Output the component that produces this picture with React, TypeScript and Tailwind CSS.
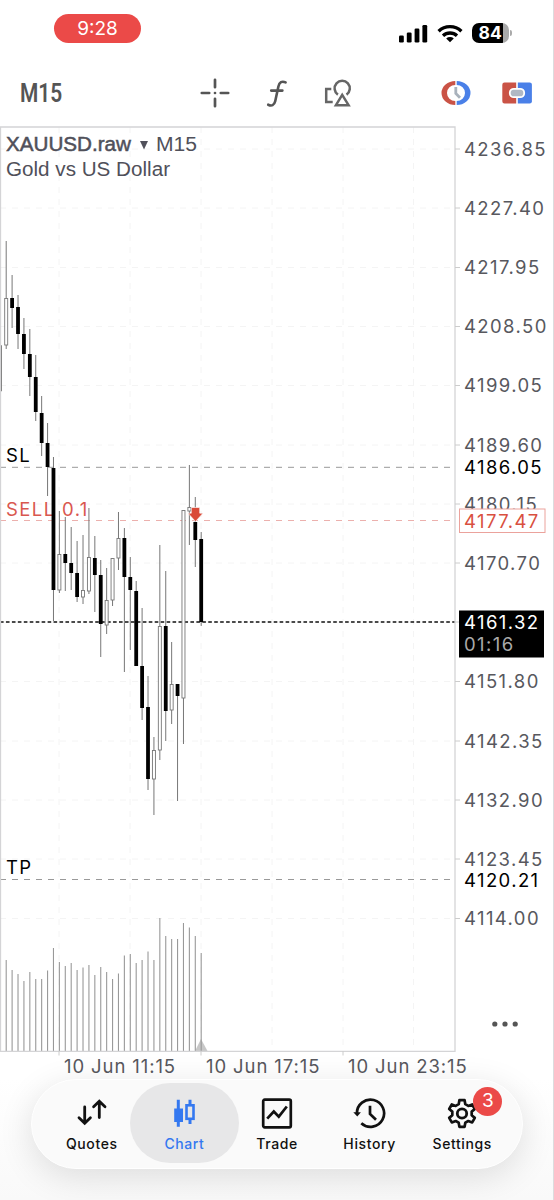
import React from 'react';

type Candle = [high: number, top: number, bottom: number, low: number, up: number, volume: number];

const STEP = 5.909;
const FIRST_X = 6.2;

const candles: Candle[] = [
  [241, 298, 345, 349, 1, 960],
  [275, 298, 308, 328, 0, 970],
  [295, 307, 334, 349, 0, 974],
  [318, 334, 354, 369, 0, 981],
  [329, 354, 377, 396, 0, 972],
  [355, 377, 412, 421, 0, 979],
  [396, 413, 443, 456, 0, 979],
  [423, 443, 467, 496, 0, 970.5],
  [457, 468, 590, 621, 0, 948],
  [511, 554, 590, 593, 1, 962],
  [517, 554, 563, 591, 0, 966],
  [527, 563, 573, 590, 0, 963],
  [541, 573, 597, 602, 0, 970],
  [535, 590, 597, 604, 1, 967.5],
  [508, 557, 591, 594, 1, 965],
  [536, 558, 575, 612, 0, 975],
  [560, 575, 624, 657, 0, 967],
  [568, 600, 625, 634, 1, 972],
  [558, 558, 600, 606, 1, 979],
  [512, 538, 558, 570, 1, 973.5],
  [528, 538, 577, 672, 0, 955.5],
  [557, 577, 590, 650, 0, 954],
  [581, 591, 666, 666, 0, 963],
  [608, 666, 708, 720, 0, 960],
  [676, 707, 779, 790, 0, 951.5],
  [737, 750, 779, 815, 1, 960],
  [545, 626, 750, 760, 1, 918],
  [571, 626, 711, 741, 0, 936],
  [642, 684, 710, 724, 1, 939],
  [684, 684, 696, 801, 0, 939],
  [510, 510, 698, 744, 1, 923],
  [465, 507, 511, 545, 1, 927.5],
  [497, 522, 540, 567, 0, 936],
  [532, 539, 622, 626, 0, 953],
];

const prices: [string, number][] = [
  ['4236.85', 149],
  ['4227.40', 208],
  ['4217.95', 267.5],
  ['4208.50', 326.5],
  ['4199.05', 385.5],
  ['4189.60', 445],
  ['4180.15', 504],
  ['4170.70', 563],
  ['4161.25', 622],
  ['4151.80', 681.5],
  ['4142.35', 741],
  ['4132.90', 800],
  ['4123.45', 859],
  ['4114.00', 918.5],
];

const times: [string, number][] = [
  ['10 Jun 11:15', 59],
  ['10 Jun 17:15', 201],
  ['10 Jun 23:15', 343],
];

const columns = [59, 130, 201, 272, 343, 413.5];

function StatusBar() {
  return (
    <header className="flex h-[58px] items-start justify-between pl-[54px] pr-[41px]">
      <div className="mt-[14px] flex h-[29px] w-[87px] items-center justify-center rounded-full bg-[#eb4a48] pt-0.5 font-['Inter',sans-serif] text-[19px] text-white">
        9:28
      </div>
      <div className="mt-[22px] flex items-center">
        <svg width="29" height="20" viewBox="0 0 29 20">
          <rect x="0" y="12.5" width="4.8" height="7" rx="1.3" />
          <rect x="7.8" y="9.5" width="4.8" height="10" rx="1.3" />
          <rect x="15.6" y="5.5" width="4.8" height="14" rx="1.3" />
          <rect x="23.4" y="2" width="4.8" height="17.5" rx="1.3" />
        </svg>
        <svg className="ml-[9px]" width="26" height="20" viewBox="0 0 26 20" fill="none" stroke="#000" strokeWidth="3.3">
          <path d="M1.6 8.2a16.4 16.4 0 0 1 22.8 0" />
          <path d="M6 12.8a10.2 10.2 0 0 1 14 0" />
          <path d="M9.2 15.6a5.6 5.6 0 0 1 7.6 0L13 19.2z" fill="#000" stroke="none" />
        </svg>
        <div className="mt-px ml-[9px] flex h-5 w-[37px] items-center overflow-hidden rounded-[7px] bg-[linear-gradient(to_right,#000_31px,#aaa_31px)] pt-px pl-[7px] font-['Inter',sans-serif] text-[17.5px] font-bold text-white">
          84
        </div>
        <div className="ml-[1.5px] h-[6px] w-[2px] rounded-r-full bg-[#aaa]" />
      </div>
    </header>
  );
}

function Toolbar() {
  return (
    <div className="flex h-[68px] items-center pt-px pl-5">
      <div className="w-[180px]">
        <span className="inline-block origin-left scale-x-[0.82] pt-px font-['Roboto',sans-serif] text-[25.5px] font-semibold text-[#555]">
          M15
        </span>
      </div>
      <svg width="30" height="30" viewBox="0 0 30 30" stroke="#555" strokeWidth="2.7" strokeLinecap="round">
        <path d="M15 1.8v7.4M15 20.8v7.4M1.8 15h7.4M20.8 15h7.4M15 15h.01" />
      </svg>
      <svg className="ml-[36px]" width="22" height="30" viewBox="0 0 22 30" fill="none" stroke="#555" strokeWidth="2.6" strokeLinecap="round">
        <path d="M19.6 4.4c-3.6-1.700-6.300-.3-7.200 4.100L9.200 23.300c-.9 4-3.600 5-7 3.400M5.200 12.600h11.200" />
      </svg>
      <svg className="ml-[35px]" width="30" height="30" viewBox="0 0 30 30" fill="none" stroke="#666" strokeWidth="2.5">
        <path d="M8.300 11H3.200v13h6.500" />
        <path d="M14.900 16.600a7.600 7.600 0 1 1 8.600 0" />
        <path d="M19.200 16.800L12.900 27.200h12.700z" />
      </svg>
      <svg className="ml-[87px]" width="32" height="30" viewBox="0 0 32 30" fill="none">
        <path d="M15.300 3A13.800 12 0 0 0 15.300 27V23A8.300 8 0 0 1 15.300 7z" fill="#ca5346" />
        <path d="M16.700 3A13.800 12 0 0 1 16.700 27V23A8.300 8 0 0 0 16.700 7z" fill="#4a80e8" />
        <path d="M15.800 9v6.400l4.200 4.400" stroke="#a9b2bc" strokeWidth="2.800" />
      </svg>
      <svg className="ml-[29px]" width="32" height="30" viewBox="0 0 32 30">
        <path d="M3.500 4.500H15.200V25.500H3.500A2.200 2.200 0 0 1 1.300 23.300V6.700A2.200 2.200 0 0 1 3.500 4.500z" fill="#ca5346" />
        <path d="M16.800 4.500H28.700A2.200 2.200 0 0 1 30.900 6.700V23.300A2.200 2.200 0 0 1 28.700 25.500H16.800z" fill="#4a80e8" />
        <rect x="8.800" y="10.800" width="14.400" height="8.400" rx="4" fill="#b0b8c4" stroke="#fff" strokeWidth="1.800" />
      </svg>
    </div>
  );
}

function Chart() {
  return (
    <svg className="block font-['Inter',sans-serif]" width="554" height="953" viewBox="0 126 554 953" fontSize="18.5" letterSpacing="1.4">
      {/* grid */}
      <g stroke="#f4f4f4" strokeWidth="1" strokeDasharray="6 6">
        {prices.map(([label, y]) => (
          <path key={label} d={`M0 ${y}H455`} />
        ))}
        {columns.map((x) => (
          <path key={x} d={`M${x} 127V1051`} />
        ))}
      </g>

      <g className="font-['Liberation_Sans',Arial,sans-serif]" fontSize="20" letterSpacing="0" fill="#50505a">
        <text x="6" y="150.5" textLength="125" lengthAdjust="spacingAndGlyphs" stroke="#50505a" strokeWidth="0.5">XAUUSD.raw</text>
        <path d="M140 141h8l-4 8.5z" />
        <text x="156" y="150.5" textLength="41" lengthAdjust="spacingAndGlyphs">M15</text>
        <text x="6" y="175.5" textLength="164" lengthAdjust="spacingAndGlyphs">Gold vs US Dollar</text>
      </g>

      {/* order levels */}
      <path d="M0 467.3H455" stroke="#999" strokeDasharray="6 6" />
      <path d="M0 520.5H455" stroke="#ecb0ad" strokeDasharray="6 6" />
      <path d="M0 879.5H455" stroke="#999" strokeDasharray="6 6" />
      <path d="M0 622H455" stroke="#111" strokeWidth="1.6" strokeDasharray="3.6 2.35" />
      <text x="6" y="462">SL</text>
      <text x="6" y="874">TP</text>
      <text x="6" y="515.5" fill="#d9574f">SELL 0.1</text>

      {/* candles and volumes */}
      <path d="M0 345.5H1.5V391H0" fill="none" stroke="#777" />
      {candles.map(([high, top, bottom, low, up, volume], i) => {
        const x = FIRST_X + i * STEP;
        return (
          <g key={i}>
            <path d={`M${x} ${volume}V1051`} stroke="#999" strokeWidth="1.1" />
            <path d={`M${x} ${high}V${low}`} stroke="#777" strokeWidth="1" />
            {up ? (
              <rect x={x - 1.5} y={top + 0.5} width="3" height={bottom - top - 0.5} fill="#fff" stroke="#777" strokeWidth="0.9" />
            ) : (
              <rect x={x - 1.9} y={top} width="3.8" height={bottom - top} fill="#000" />
            )}
          </g>
        );
      })}
      <path d="M191.3 507.5h8.4v5.7h3.3l-7.5 8.3-7.5-8.3h3.3z" fill="#d94a38" stroke="#fff" strokeWidth="0.6" />
      <path d="M195 1051l6-12 6.5 12z" fill="#999" fillOpacity="0.55" />

      {/* frame */}
      <path d="M0.5 1051.3V127H455V1051.3z" fill="none" stroke="#d4d4d6" strokeWidth="1.3" />

      {/* price scale */}
      {prices.map(([label, y]) => (
        <g key={label}>
          <path d={`M455 ${y}h5`} stroke="#ccc" />
          {label !== '4161.25' && (
            <text x="464" y={y + 6.5} fill="#58585e">{label}</text>
          )}
        </g>
      ))}
      <text x="464" y="474">4186.05</text>
      <text x="464" y="886.5">4120.21</text>
      <rect x="459.5" y="509" width="85.5" height="23.5" fill="#fff" stroke="#eba29c" />
      <text x="464" y="527.5" fill="#d9503f">4177.47</text>
      <rect x="459" y="610.5" width="85" height="47" />
      <text x="464" y="629" fill="#fff">4161.32</text>
      <text x="464" y="651" fill="#aaa">01:16</text>

      {/* time scale */}
      {times.map(([label, x]) => (
        <g key={label}>
          <path d={`M${x} 1051v4.5`} stroke="#ccc" />
          <text x={x + 5} y="1072.5" fill="#58585e" letterSpacing="0.9">{label}</text>
        </g>
      ))}

      <g fill="#555">
        <circle cx="494.8" cy="1024" r="2.6" />
        <circle cx="505" cy="1024" r="2.6" />
        <circle cx="515.2" cy="1024" r="2.6" />
      </g>
    </svg>
  );
}

const tabs = [
  {
    label: 'Quotes',
    icon: <path d="M9.7 10v16M4 20.7l5.7 5.5 5.7-5.5M24.3 20.5v-16M18.6 9.7l5.700-5.500 5.700 5.500" strokeWidth="2.8" strokeLinecap="round" />,
  },
  {
    label: 'Chart',
    icon: (
      <>
        <path d="M11.3 2.7v27M23 2.7v5.500M23 21.500v5.500" strokeWidth="3" />
        <rect x="7.2" y="11.5" width="8.8" height="13.5" fill="currentColor" stroke="none" />
        <rect x="19.5" y="8.3" width="7" height="13.5" strokeWidth="2.6" />
      </>
    ),
  },
  {
    label: 'Trade',
    icon: (
      <>
        <rect x="3.2" y="2.7" width="27.6" height="27.600" rx="1.5" strokeWidth="2.7" />
        <path d="M7.2 21.7l6.600-7.200 5 5.200 8-10.200" strokeWidth="2.7" />
      </>
    ),
  },
  {
    label: 'History',
    icon: (
      <>
        <path d="M3.9 16.500A13.600 13.600 0 1 1 8.300 26.300" strokeWidth="2.7" />
        <path d="M0.300 15.200h7.600l-3.600 4.300z" fill="currentColor" stroke="none" />
        <path d="M17 8.800v8.200l6 5.700" strokeWidth="2.7" />
      </>
    ),
  },
  {
    label: 'Settings',
    badge: 3,
    icon: (
      <>
        <path
          d="M14.4 3.2h5.2l.7 4 3 1.7 3.9-1.4 2.6 4.5-3.1 2.6v3.700l3.100 2.600-2.600 4.500-3.900-1.400-3 1.700-.7 4.100h-5.200l-.7-4.100-3-1.700-3.900 1.400-2.600-4.500 3.100-2.600v-3.700L4.200 12l2.600-4.500 3.900 1.400 3-1.700z"
          strokeWidth="2.7"
          strokeLinejoin="round"
        />
        <circle cx="17" cy="16.5" r="4.700" strokeWidth="2.800" />
      </>
    ),
  },
];

function TabBar() {
  return (
    <nav className="relative ml-[31px] flex h-[90px] w-[492px] justify-center rounded-full border border-white bg-[#fafafa] font-['Inter',sans-serif] shadow-[0_8px_34px_rgba(0,0,0,0.12)]">
      {tabs.map(({ label, icon, badge }) => {
        const active = label === 'Chart';
        return (
          <div
            key={label}
            className={`relative flex w-[92.6px] flex-col items-center pt-[17px] ${active ? 'text-[#3478f0]' : 'text-[#111]'}`}
          >
            {active && <div className="absolute -inset-x-2 top-[3px] h-[80px] rounded-full bg-[#e7e7e8]" />}
            <svg className="relative" width="34" height="34" viewBox="0 0 34 34" fill="none" stroke="currentColor">
              {icon}
            </svg>
            <span className="relative mt-[3px] text-[14px] leading-5 font-medium tracking-[0.6px]">{label}</span>
            {badge && (
              <span className="absolute top-[7px] left-[57.5px] flex size-[29px] items-center justify-center rounded-full bg-[#eb4a48] text-[19px] text-white">
                {badge}
              </span>
            )}
          </div>
        );
      })}
    </nav>
  );
}

export default function App() {
  return (
    <div className="h-[1200px] w-[554px] overflow-hidden border-r border-[#dcdcde] bg-white">
      <StatusBar />
      <Toolbar />
      <Chart />
      <div className="h-[121px] bg-[linear-gradient(to_bottom,#fff0,#f9f9f9)]">
        <TabBar />
      </div>
    </div>
  );
}
